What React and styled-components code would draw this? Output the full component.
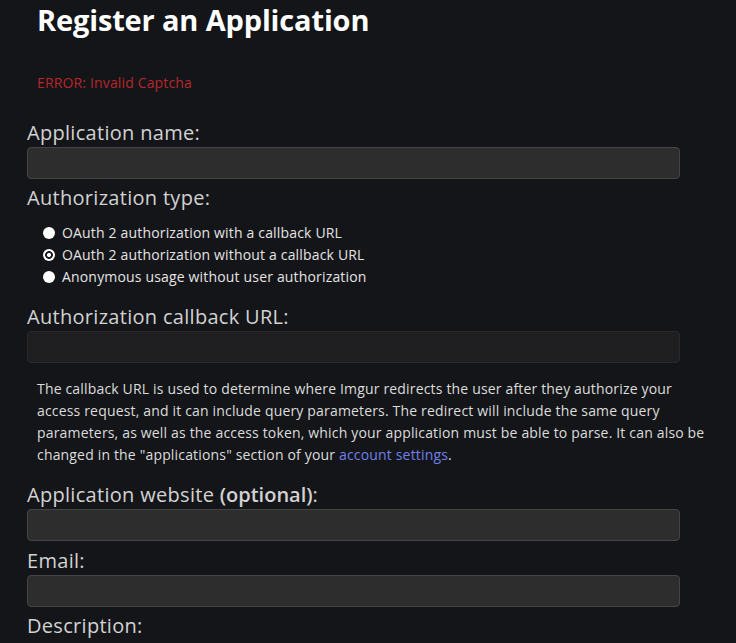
import React, {useState} from "react";
import styled, {createGlobalStyle} from "styled-components";

const GlobalStyle = createGlobalStyle`
  body {
    margin: 0;
    background-color: #141518;
    font-family: "Open Sans", "Noto Sans", sans-serif;
    color: #dcdcdc;
  }
`

const Page = styled.div`
  width: 700px;
  padding: 0 0 40px 27px;
`

const Title = styled.h1`
  margin: 0 0 0 10px;
  font-size: 29px;
  font-weight: 700;
  line-height: 40px;
  letter-spacing: -0.15px;
  color: #ffffff;
`

const ErrorText = styled.p`
  margin: 33px 0 0 10px;
  font-size: 14px;
  line-height: 19px;
  letter-spacing: 0.15px;
  color: #b8262b;
`

const Form = styled.form`
  margin-top: 29px;
  display: flex;
  flex-direction: column;
`

const Label = styled.label`
  display: block;
  font-size: 20px;
  font-weight: 400;
  line-height: 24px;
  letter-spacing: 0.3px;
  color: #d2d2d2;
  margin-top: ${(props) => props.$top || "0"};
  margin-bottom: 2px;

  b {
    font-weight: 600;
    letter-spacing: 0;
  }
`

const Input = styled.input`
  box-sizing: border-box;
  width: 653px;
  height: 32px;
  margin: 0 0 7px;
  padding: 4px 8px;
  border-radius: 4px;
  border: 1px solid ${(props) => (props.disabled ? "#29292c" : "#444446")};
  background-color: ${(props) => (props.disabled ? "#1f1f21" : "#2d2d2d")};
  color: #eee;
  font-family: inherit;
  font-size: 14px;
  outline: none;
`

const RadioList = styled.div`
  margin: 10px 0 0 16px;
  display: flex;
  flex-direction: column;
`

const RadioRow = styled.label`
  display: flex;
  align-items: center;
  gap: 7px;
  font-size: 14px;
  line-height: 22px;
  letter-spacing: 0.17px;
  color: #e4e4e4;
  cursor: pointer;
`

const Radio = styled.input`
  appearance: none;
  margin: 0;
  width: 12px;
  height: 12px;
  border-radius: 50%;
  background: #ffffff;
  cursor: pointer;

  &:checked {
    background: radial-gradient(circle, #ffffff 0 1.8px, #1c1c1c 2.3px 3.6px, #ffffff 4.1px);
  }
`

const Help = styled.p`
  margin: 8px 0 17px 10px;
  width: 676px;
  font-size: 14px;
  line-height: 22px;
  letter-spacing: 0.17px;
  color: #dcdcdc;

  a {
    color: #6f80ea;
    text-decoration: none;
  }
`

const authTypes = [
    {id: "oauth-callback", text: "OAuth 2 authorization with a callback URL"},
    {id: "oauth-no-callback", text: "OAuth 2 authorization without a callback URL"},
    {id: "anonymous", text: "Anonymous usage without user authorization"},
];

const App = () => {
    const [authType, setAuthType] = useState("oauth-no-callback");

    return (
        <>
            <GlobalStyle/>
            <Page>
                <Title>Register an Application</Title>
                <ErrorText>ERROR: Invalid Captcha</ErrorText>

                <Form>
                    <Label htmlFor="name">Application name:</Label>
                    <Input id="name" type="text"/>

                    <Label>Authorization type:</Label>
                    <RadioList>
                        {authTypes.map((t) => (
                            <RadioRow key={t.id}>
                                <Radio
                                    type="radio"
                                    name="authType"
                                    checked={authType === t.id}
                                    onChange={() => setAuthType(t.id)}
                                />
                                {t.text}
                            </RadioRow>
                        ))}
                    </RadioList>

                    <Label htmlFor="callback" $top="17px">Authorization callback URL:</Label>
                    <Input id="callback" type="text" disabled={authType !== "oauth-callback"}/>

                    <Help>
                        The callback URL is used to determine where Imgur redirects the user after they authorize your
                        access request, and it can include query parameters. The redirect will include the same query
                        parameters, as well as the access token, which your application must be able to parse. It can
                        also be changed in the "applications" section of your <a href="#settings">account settings</a>.
                    </Help>

                    <Label htmlFor="website">Application website <b>(optional)</b>:</Label>
                    <Input id="website" type="text"/>

                    <Label htmlFor="email" $top="1px">Email:</Label>
                    <Input id="email" type="email"/>

                    <Label htmlFor="description">Description:</Label>
                </Form>
            </Page>
        </>
    );
}
export default App;
